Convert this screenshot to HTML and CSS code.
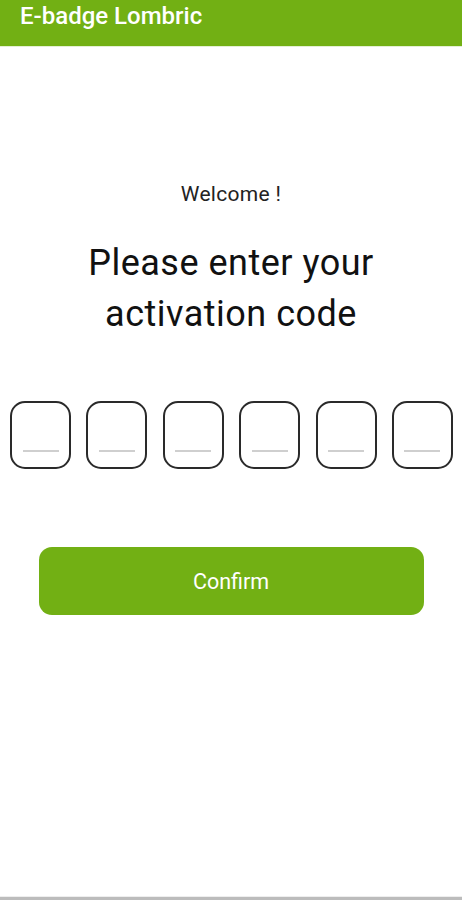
FILE: index.html
```html
<!DOCTYPE html>
<html lang="en">
<head>
  <meta charset="UTF-8">
  <title>E-badge Lombric</title>
  <link rel="stylesheet" href="styles.css">
</head>
<body>
  <div class="screen">
    <header class="appbar">
      <h1>E-badge Lombric</h1>
    </header>

    <main class="content">
      <p class="welcome">Welcome !</p>
      <h2 class="prompt">Please enter your<br>activation code</h2>

      <form class="code_form" method="get" action="">
        <div class="code_row">
          <label class="digit"><input type="text" maxlength="1" name="d1"></label>
          <label class="digit"><input type="text" maxlength="1" name="d2"></label>
          <label class="digit"><input type="text" maxlength="1" name="d3"></label>
          <label class="digit"><input type="text" maxlength="1" name="d4"></label>
          <label class="digit"><input type="text" maxlength="1" name="d5"></label>
          <label class="digit"><input type="text" maxlength="1" name="d6"></label>
        </div>
        <button type="button" class="confirm">Confirm</button>
      </form>
    </main>

    <div class="bottom_rule"></div>
  </div>
</body>
</html>
```

FILE: styles.css
```css
html,body{
    height: 100%;
    margin: 0;
    background: #fff;
}
body{
    font-family: Roboto, "Liberation Sans", sans-serif;
    color: #111;
}
button, input{
    font-family: inherit;
    font-size: 100%;
}

.screen{
    height: 900px;
    display: flex;
    flex-direction: column;
}

.appbar{
    height: 47px;
    background: #72b014;
    border-bottom: 1px solid #e4f0d4;
    box-sizing: border-box;
    padding: 0 20px;
}
.appbar h1{
    margin: 0;
    font-size: 24px;
    font-weight: 500;
    color: #fff;
    line-height: 32px;
}

.content{
    flex: 1;
    display: flex;
    flex-direction: column;
    align-items: center;
}
.welcome{
    margin: 135px 0 0;
    font-size: 21px;
    line-height: 24px;
    letter-spacing: 0.3px;
    color: #222;
}
.prompt{
    margin: 32px 0 0;
    font-size: 36px;
    font-weight: 400;
    line-height: 51px;
    letter-spacing: 0.5px;
    text-align: center;
    color: #111;
}

.code_form{
    align-self: stretch;
    display: flex;
    flex-direction: column;
    align-items: center;
}
.code_row{
    align-self: stretch;
    display: flex;
    justify-content: space-between;
    padding: 0 9px 0 10px;
    margin-top: 61px;
}
.digit{
    width: 61px;
    height: 68px;
    box-sizing: border-box;
    border: 2px solid #2a2a2a;
    border-radius: 15px;
    display: flex;
    justify-content: center;
    align-items: flex-end;
    padding-bottom: 15px;
}
.digit input{
    width: 36px;
    border: 0;
    border-bottom: 2px solid #cfcfcf;
    padding: 0;
    height: 20px;
    text-align: center;
    outline: none;
    background: transparent;
}

.confirm{
    margin-top: 78px;
    width: 385px;
    height: 68px;
    border: 0;
    border-radius: 13px;
    background: #72b014;
    color: #fff;
    font-size: 21.5px;
    font-weight: 400;
}

.bottom_rule{
    height: 3px;
    background: #bcbcbc;
    border-top: 1px solid #eee;
}
```
